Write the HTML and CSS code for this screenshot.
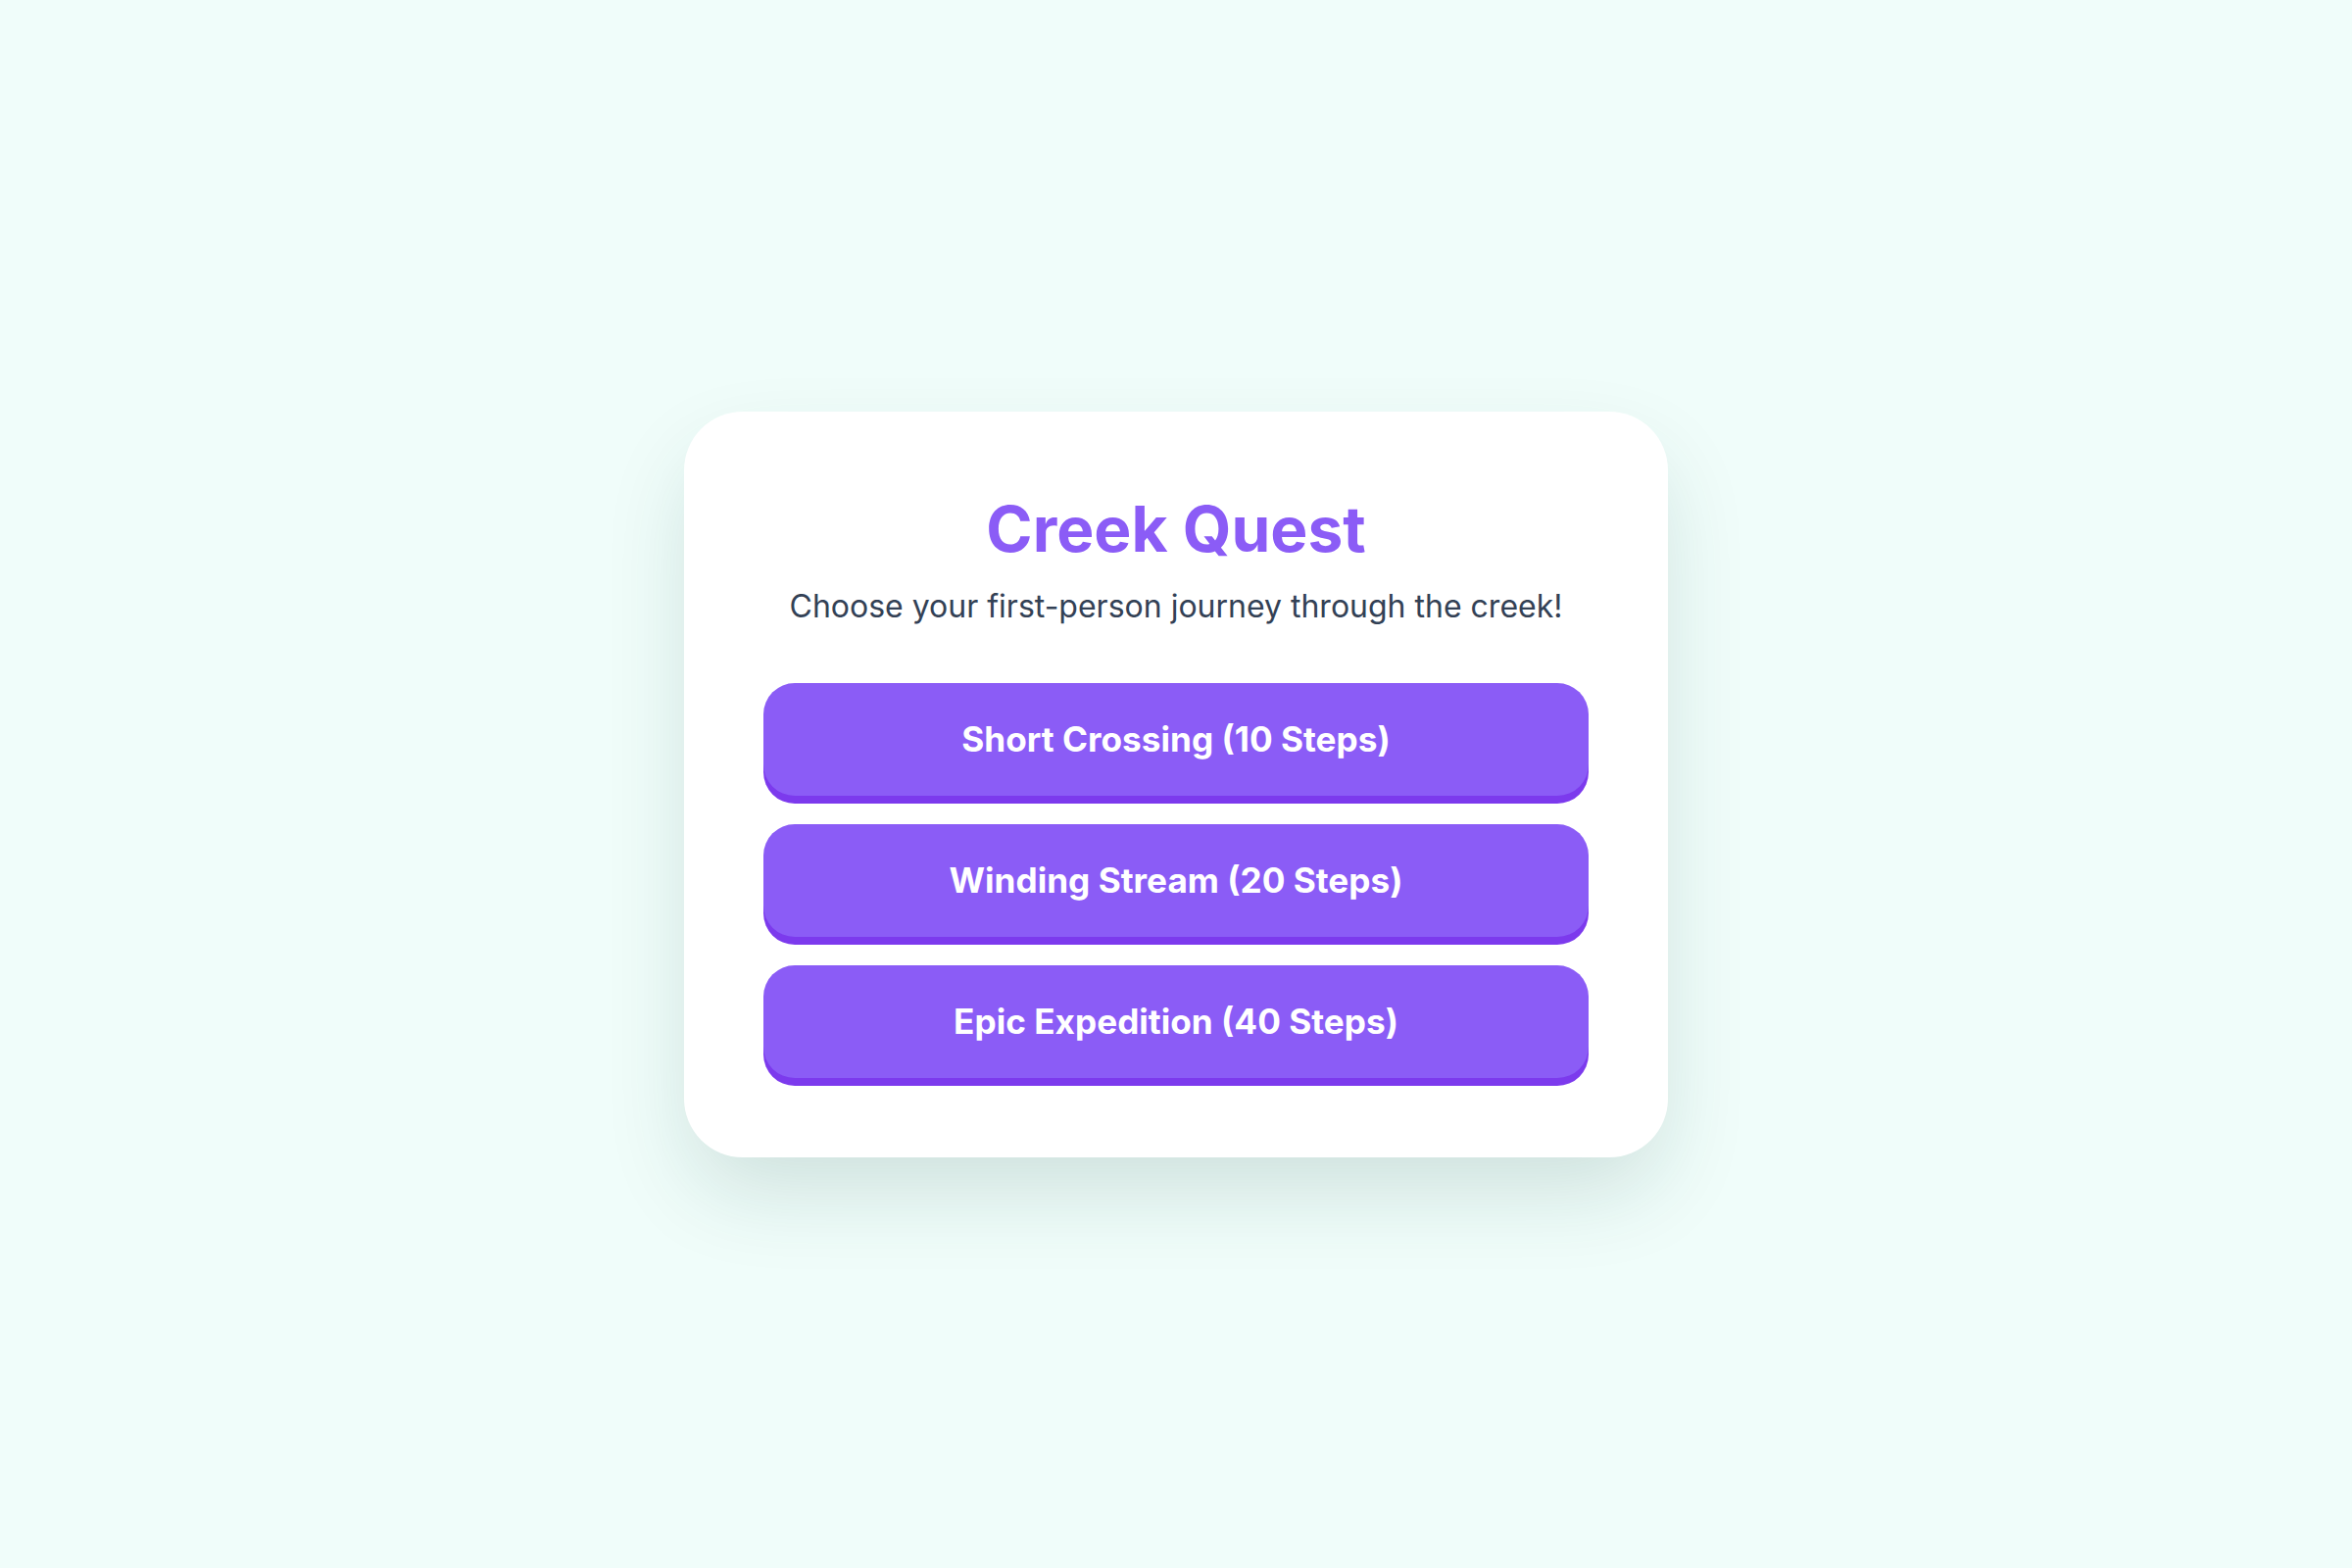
FILE: index.html
```html
<!DOCTYPE html>
<html lang="en">
<head>
<meta charset="utf-8">
<title>Creek Quest</title>
<link rel="stylesheet" href="styles.css">
</head>
<body>
<main class="stage">
  <section class="menu-card">
    <h1 class="menu-title">Creek Quest</h1>
    <p class="menu-subtitle">Choose your first-person journey through the creek!</p>
    <div class="menu-options">
      <button class="journey-btn" type="button">Short Crossing (10 Steps)</button>
      <button class="journey-btn" type="button">Winding Stream (20 Steps)</button>
      <button class="journey-btn" type="button">Epic Expedition (40 Steps)</button>
    </div>
  </section>
</main>
</body>
</html>
```
FILE: styles.css
```css
* {
  box-sizing: border-box;
}

html,
body {
  margin: 0;
  height: 100%;
}

body {
  background: #f0fdfa;
  font-family: Inter, "Noto Sans", "Liberation Sans", sans-serif;
}

.stage {
  min-height: 100vh;
  display: flex;
  align-items: center;
  justify-content: center;
}

.menu-card {
  width: 1004px;
  padding: 81px;
  background: #ffffff;
  border-radius: 60px;
  box-shadow: 0 40px 90px -10px rgba(20, 70, 60, 0.16);
  text-align: center;
}

.menu-title {
  margin: 0 0 21px;
  font-size: 64px;
  font-weight: 700;
  line-height: normal;
  color: #8b5cf6;
}

.menu-subtitle {
  margin: 0 0 59px;
  font-size: 32px;
  font-weight: 400;
  line-height: normal;
  color: #334155;
}

.menu-options {
  display: flex;
  flex-direction: column;
  gap: 29px;
}

.journey-btn {
  height: 115px;
  display: flex;
  align-items: center;
  justify-content: center;
  border: none;
  border-radius: 32px;
  background: #8b5cf6;
  box-shadow: 0 8px 0 #7c3aed;
  color: #ffffff;
  font-family: inherit;
  font-size: 35.2px;
  font-weight: 700;
  line-height: normal;
  cursor: pointer;
}
```
